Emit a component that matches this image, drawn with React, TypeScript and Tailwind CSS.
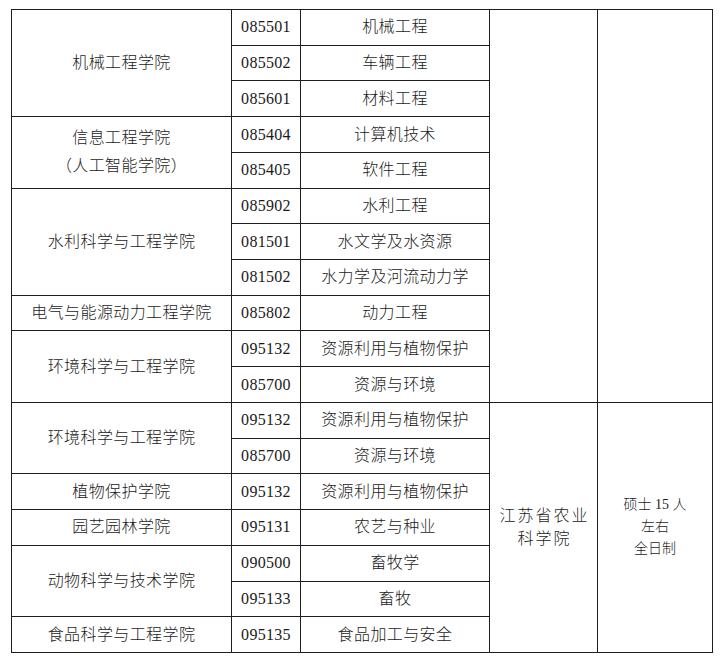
import React from "react";

type Row = {
  college?: string[];
  span?: number;
  code: string;
  major: string;
};

const rows: Row[] = [
  { college: ["机械工程学院"], span: 3, code: "085501", major: "机械工程" },
  { code: "085502", major: "车辆工程" },
  { code: "085601", major: "材料工程" },
  { college: ["信息工程学院", "（人工智能学院）"], span: 2, code: "085404", major: "计算机技术" },
  { code: "085405", major: "软件工程" },
  { college: ["水利科学与工程学院"], span: 3, code: "085902", major: "水利工程" },
  { code: "081501", major: "水文学及水资源" },
  { code: "081502", major: "水力学及河流动力学" },
  { college: ["电气与能源动力工程学院"], span: 1, code: "085802", major: "动力工程" },
  { college: ["环境科学与工程学院"], span: 2, code: "095132", major: "资源利用与植物保护" },
  { code: "085700", major: "资源与环境" },
  { college: ["环境科学与工程学院"], span: 2, code: "095132", major: "资源利用与植物保护" },
  { code: "085700", major: "资源与环境" },
  { college: ["植物保护学院"], span: 1, code: "095132", major: "资源利用与植物保护" },
  { college: ["园艺园林学院"], span: 1, code: "095131", major: "农艺与种业" },
  { college: ["动物科学与技术学院"], span: 2, code: "090500", major: "畜牧学" },
  { code: "095133", major: "畜牧" },
  { college: ["食品科学与工程学院"], span: 1, code: "095135", major: "食品加工与安全" },
];

const cell = "border border-[#1e1e1e] text-center align-middle p-0";

export default function App() {
  return (
    <div className="w-[722px] h-[662px] bg-white pt-[9px] pl-[11px]">
      <table
        className="border-collapse table-fixed w-[701px] text-[16px] leading-[28px] text-[#1a1a1a]"
        style={{ fontFamily: '"Liberation Serif", "Noto Sans CJK SC", serif' }}
      >
        <colgroup>
          <col className="w-[220px]" />
          <col className="w-[69px]" />
          <col className="w-[189px]" />
          <col className="w-[108px]" />
          <col className="w-[115px]" />
        </colgroup>
        <tbody>
          {rows.map((r, i) => (
            <tr key={i} className="h-[35.72px]">
              {r.college && (
                <td rowSpan={r.span} className={cell}>
                  {r.college.map((t, j) => (
                    <div key={j} className="font-light tracking-[0.4px]">{t}</div>
                  ))}
                </td>
              )}
              <td className={cell + " tracking-[0.3px]"}>{r.code}</td>
              <td className={cell + " font-light tracking-[0.4px]"}>{r.major}</td>
              {i === 0 && (
                <>
                  <td rowSpan={11} className={cell}></td>
                  <td rowSpan={11} className={cell}></td>
                </>
              )}
              {i === 11 && (
                <>
                  <td rowSpan={7} className={cell}>
                    <div className="font-light leading-[23px] tracking-[2px] pl-[2px]">江苏省农业</div>
                    <div className="font-light leading-[23px] tracking-[2px] pl-[2px]">科学院</div>
                  </td>
                  <td rowSpan={7} className={cell + " text-[14px]"}>
                    <div className="leading-[22px] font-light">硕士 15 人</div>
                    <div className="leading-[22px] font-light">左右</div>
                    <div className="leading-[22px] font-light">全日制</div>
                  </td>
                </>
              )}
            </tr>
          ))}
        </tbody>
      </table>
    </div>
  );
}
